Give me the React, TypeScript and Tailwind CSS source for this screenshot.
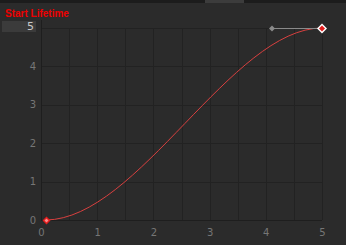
const X0 = 41;
const UX = 56.2;
const Y0 = 220;
const UY = 38.4;

const CurveEditor = () => {
  const vLines = Array.from({ length: 11 }, (_, i) => X0 + (UX / 2) * i);
  const hLines = Array.from({ length: 6 }, (_, i) => Y0 - UY * i);

  return (
    <div className="relative flex-1">
      <svg width={346} height={242} className="block">
        <g transform="translate(0,-3)">
          {/* grid */}
          {vLines.map((x, i) => (
            <line key={`v${i}`} x1={Math.round(x) + 0.5} y1={28} x2={Math.round(x) + 0.5} y2={220} stroke="#222222" strokeWidth={1} />
          ))}
          {hLines.map((y, i) => (
            <line key={`h${i}`} x1={41} y1={Math.round(y) + 0.5} x2={322} y2={Math.round(y) + 0.5} stroke="#222222" strokeWidth={1} />
          ))}
          <line x1={41.5} y1={20} x2={41.5} y2={220} stroke="#1e1e1e" />
          <line x1={41} y1={220.5} x2={322} y2={220.5} stroke="#1e1e1e" />

          {/* y labels */}
          {[0, 1, 2, 3, 4].map((v) => (
            <text key={`y${v}`} x={36} y={Y0 - UY * v + 3.5} textAnchor="end" fontSize={10} fill="#767676" fontFamily="'DejaVu Sans', sans-serif">
              {v}
            </text>
          ))}
          {/* x labels */}
          {[0, 1, 2, 3, 4, 5].map((v) => (
            <text key={`x${v}`} x={X0 + UX * v + 0.5} y={236} textAnchor="middle" fontSize={10} fill="#767676" fontFamily="'DejaVu Sans', sans-serif">
              {v}
            </text>
          ))}

          {/* curve */}
          <path d="M46,220 C138,219 232,28 322,28" fill="none" stroke="#d8403f" strokeWidth={1} />

          {/* tangent handle */}
          <line x1={272} y1={28.5} x2={322} y2={28.5} stroke="#8a8a8a" strokeWidth={1} />
          <path d="M272,25.5 L275,28.5 L272,31.5 L269,28.5 Z" fill="#8a8a8a" />

          {/* keys */}
          <path d="M46.5,216.5 L50.5,220.5 L46.5,224.5 L42.5,220.5 Z" fill="#e21c1c" />
          <path d="M46.5,218.5 L48.5,220.5 L46.5,222.5 L44.5,220.5 Z" fill="#ff8a8a" />
          <path d="M322,23.5 L327,28.5 L322,33.5 L317,28.5 Z" fill="#ffffff" />
          <path d="M322,25.5 L325,28.5 L322,31.5 L319,28.5 Z" fill="#e21c1c" />
        </g>
      </svg>

      <div className="absolute left-[5px] top-[6px] text-[10px] font-bold leading-none text-[#ee0000] font-['Liberation_Sans',sans-serif]">
        Start Lifetime
      </div>
      <div className="absolute left-[2px] top-[18px] flex h-[11px] w-[34px] items-center justify-end bg-[#3b3b3b] pr-[2px] text-[11px] leading-none text-[#c8c8c8] font-['DejaVu_Sans',sans-serif]">
        5
      </div>
    </div>
  );
}

export default function App() {
  return (
    <div className="flex h-[245px] w-[346px] flex-col overflow-hidden bg-[#2b2b2b]">
      <div className="flex h-[3px] bg-[#1c1c1c]">
        <div className="ml-[205px] w-[39px] bg-[#3c3c3c]" />
      </div>
      <CurveEditor />
    </div>
  );
}
